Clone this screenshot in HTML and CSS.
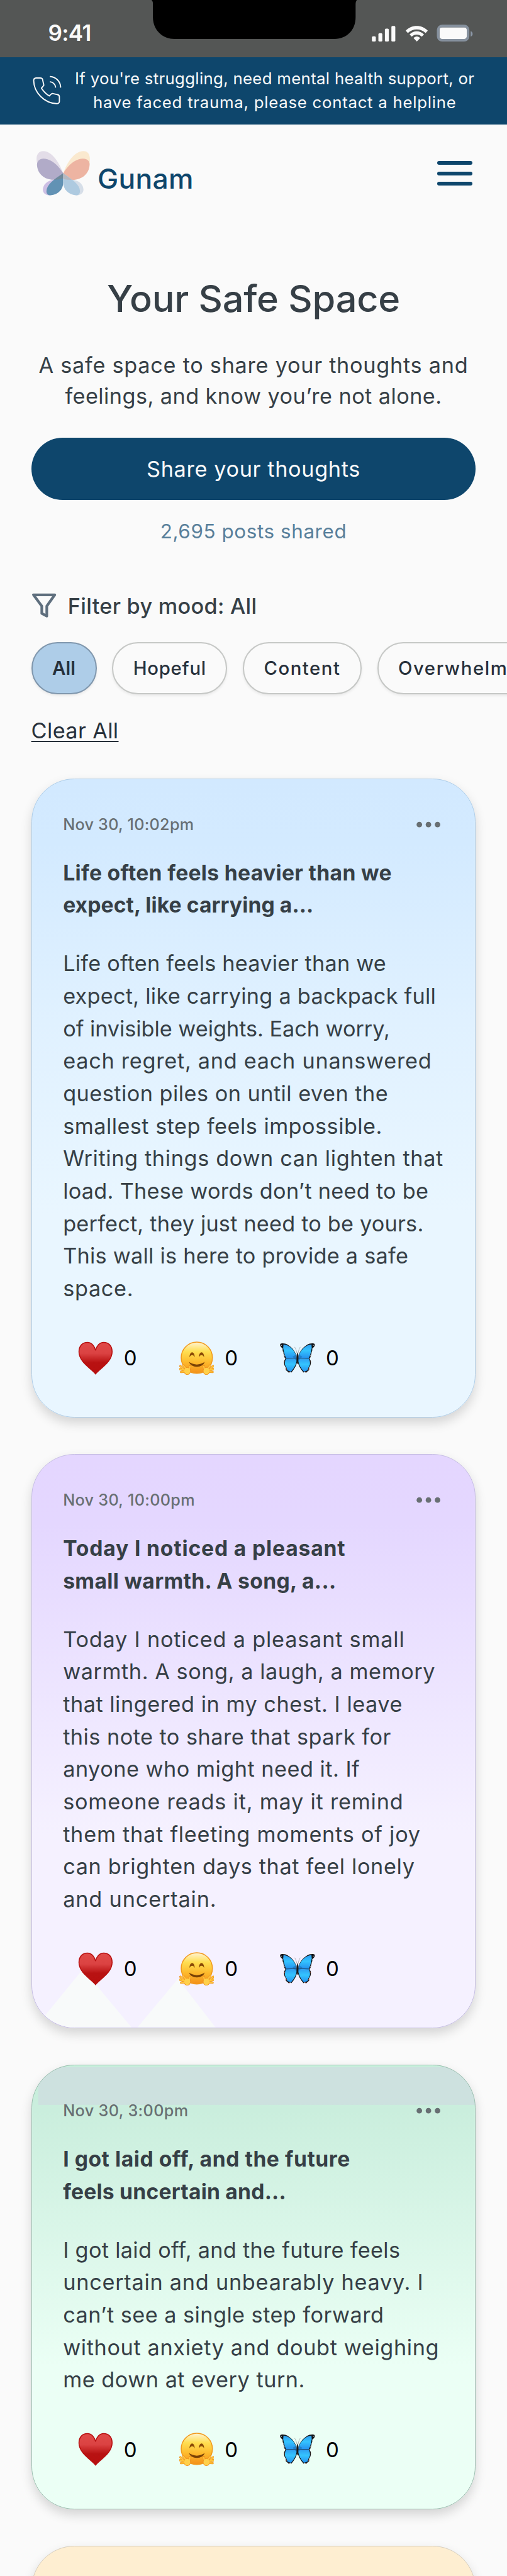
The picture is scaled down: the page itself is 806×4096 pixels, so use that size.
FILE: index.html
```html
<!DOCTYPE html>
<html lang="en">
<head>
<meta charset="utf-8">
<title>Gunam – Your Safe Space</title>
<link rel="stylesheet" href="styles.css">
</head>
<body>
<svg class="sprite" width="0" height="0" aria-hidden="true">
  <defs>
    <linearGradient id="heart-fill" x1="0" y1="0" x2="0" y2="1">
      <stop offset="0" stop-color="#e04b49"/><stop offset=".35" stop-color="#db4242"/><stop offset=".64" stop-color="#b81212"/><stop offset="1" stop-color="#b70f0f"/>
    </linearGradient>
    <linearGradient id="face-fill" x1="0" y1="0" x2="0" y2="1">
      <stop offset="0" stop-color="#fff3d2"/><stop offset=".3" stop-color="#ffdf52"/><stop offset=".65" stop-color="#fdb92c"/><stop offset="1" stop-color="#f3901a"/>
    </linearGradient>
    <linearGradient id="wing-fill" x1="0" y1="0" x2="0" y2="1">
      <stop offset="0" stop-color="#2f9df0"/><stop offset=".45" stop-color="#34c4ff"/><stop offset="1" stop-color="#2490ee"/>
    </linearGradient>
    <symbol id="heart" viewBox="-2 -2 108 104">
      <path d="M52 98C40 82 1 62 1 30C1 11 12 1 27 1C40 1 49 12 52 26C55 12 64 1 77 1C92 1 103 11 103 30C103 62 64 82 52 98Z" fill="url(#heart-fill)" stroke="#b81111" stroke-width="3"/>
    </symbol>
    <symbol id="hug" viewBox="-0.5 -1 108 104">
      <circle cx="53.500" cy="49" r="48" fill="url(#face-fill)" stroke="#f29a1e" stroke-width="3"/>
      <path d="M31 48C31 27 47 27 47 48C43 39 35 39 31 48ZM60 48C60 27 76 27 76 48C72 39 64 39 60 48Z" fill="#8a4a06"/>
      <path d="M29 62Q53.500 78 78 62Q72 77 53.500 77Q35 77 29 62Z" fill="#7a4205"/>
      <g id="hand">
        <path d="M18 90L3 75M18 88L2 84M20 92L5 93M24 88L12 73M29 90L32 74" stroke="#f0931f" stroke-width="7" stroke-linecap="round"/>
        <ellipse cx="24" cy="90" rx="11" ry="12" fill="#f0931f"/>
        <path d="M18 90L3 75M18 88L2 84M20 92L5 93M24 88L12 73M29 90L32 76" stroke="#ffc63c" stroke-width="4" stroke-linecap="round"/>
        <ellipse cx="24" cy="90" rx="9" ry="10" fill="#ffd04a"/>
      </g>
      <use href="#hand" transform="translate(107 0) scale(-1 1)"/>
    </symbol>
    <symbol id="butterfly" viewBox="0 -6 108 104">
      <g id="wing">
        <path d="M1 2C4 -1 12 0 17 1C33 7 46 22 51 38L53 56C51 68 44 80 35 90L31 87L28 91L24 87L18 82L18 74C13 68 12 60 13 54L17 46C12 42 13 38 12 34L9 24L7 14C3 12 -1 7 1 2Z" fill="#121417"/>
        <path d="M11 3C28 4 45 20 50 38L51 45L19 45.500L15 36L12 24L10 14Z" fill="url(#wing-fill)"/>
        <path d="M19 47L51 46C53 58 47 73 34 87L23 83L20 74C14 67 14 56 19 47Z" fill="url(#wing-fill)"/>
        <path d="M39 41L52 33V54L46 48Z" fill="#15568f" opacity=".4"/>
        <g fill="#fff"><circle cx="5" cy="6" r="1.100"/><circle cx="8" cy="17" r="1"/><circle cx="11" cy="27" r="1"/><circle cx="14" cy="38" r="1"/></g>
        <g fill="#e2562e"><circle cx="15" cy="57" r="1"/><circle cx="20" cy="79" r="1.200"/><circle cx="29" cy="88" r="1.200"/></g>
        <path d="M52 29C50 20 48 14 45 11" fill="none" stroke="#777" stroke-width="1"/>
      </g>
      <use href="#wing" transform="translate(108 0) scale(-1 1)"/>
      <ellipse cx="54" cy="46" rx="2.500" ry="18" fill="#1c1a1a"/>
    </symbol>
    <symbol id="dots" viewBox="0 0 74 20">
      <circle cx="9" cy="10" r="8.500"/><circle cx="37" cy="10" r="8.500"/><circle cx="65" cy="10" r="8.500"/>
    </symbol>
  </defs>
</svg>

<div class="status">
  <span class="status-time" data-w="132">9:41</span>
  <svg class="notch" viewBox="0 0 632 120"><path d="M0 0H632Q628 4 628 12V53C628 92 602 120 562 120H72C32 120 4 92 4 53V12Q4 4 0 0Z"/></svg>
  <svg class="status-icons" viewBox="0 0 1020 270">
    <g fill="#fafafa">
      <rect x="42" y="156" width="36" height="48" rx="10"/><rect x="102" y="126" width="36" height="78" rx="10"/>
      <rect x="162" y="84" width="36" height="120" rx="10"/><rect x="222" y="60" width="36" height="144" rx="10"/>
      <path d="M354 103C410 45 502 45 558 103L538 125C492 80 420 80 374 125ZM390 138C428 99 484 99 523 138L503 159C476 132 436 132 409 159ZM426 172C444 152 470 152 488 172L457 204Z"/>
      <rect x="666" y="72" width="252" height="108" rx="22"/>
    </g>
    <rect x="654" y="60" width="276" height="132" rx="36" fill="none" stroke="#86919e" stroke-width="24"/>
    <path d="M954 108Q972 116 972 133Q972 150 954 159Z" fill="#8c98a8"/>
  </svg>
</div>

<div class="banner">
  <svg class="phone" viewBox="34 68 270 272" fill="none" stroke="#fafafa" stroke-width="11" stroke-linecap="round" stroke-linejoin="round">
    <path d="M64 90H104Q122 90 126 104C130 122 130 132 136 146Q140 158 132 166L115 184C133 214 155 238 188 257L206 240Q214 233 224 236C238 240 248 242 262 244Q282 248 282 264V308Q280 330 256 329C142 324 44 226 43 112Q44 92 64 90Z"/>
    <path d="M198 77C248 80 290 120 294 175M198 126C222 130 242 150 247 175"/>
  </svg>
  <p class="banner-text"><span class="line" data-w="1230">If you're struggling, need mental health support, or</span> <span class="line" data-w="1118">have faced trauma, please contact a helpline</span></p>
</div>

<header class="header">
  <div class="brand">
    <svg class="logo" viewBox="64 766 496 412">
      <path d="M311 973C270 860 200 768 126 768C80 768 50 810 72 890C80 970 150 1040 235 1030Z" fill="#e3dde8"/>
      <path d="M311 973C350 860 420 768 500 768C545 768 568 810 553 890C546 970 470 1040 390 1032Z" fill="#fae9cf"/>
      <path d="M235 1030C160 1036 123 1080 123 1125C123 1160 155 1178 190 1176L290 1070Z" fill="#cdbfe4"/>
      <path d="M388 1032C460 1036 498 1080 498 1125C498 1160 465 1178 430 1176L330 1070Z" fill="#d6dee8"/>
      <path d="M311 973C260 890 190 837 130 837C85 837 66 870 69 900C75 980 140 1036 230 1032L260 1015Z" fill="#b1abc8"/>
      <path d="M311 973C360 890 430 837 492 837C540 837 558 868 555 895C550 980 480 1036 390 1033Z" fill="#edb4a2"/>
      <path d="M311 973C230 1025 156 1080 156 1138C156 1165 172 1176 195 1176C265 1172 311 1120 311 1060Z" fill="#6292b4"/>
      <path d="M311 973L226 1034Q270 1032 311 1018Z" fill="#718999"/>
      <path d="M311 973C395 1030 466 1080 466 1138C466 1165 450 1176 428 1176C360 1172 311 1120 311 1060Z" fill="#aecae0"/>
      <path d="M311 973L391 1034Q350 1034 311 1026Z" fill="#b5b8c0"/>
    </svg>
    <span class="brand-name" data-w="296">Gunam</span>
  </div>
  <div class="menu"><i></i><i></i><i></i></div>
</header>

<main class="page">
  <section class="hero">
    <h1 class="title"><span class="line" data-w="902">Your Safe Space</span></h1>
    <p class="subtitle"><span class="line" data-w="1322">A safe space to share your thoughts and</span> <span class="line" data-w="1160">feelings, and know you’re not alone.</span></p>
    <button class="share"><span class="line" data-w="658">Share your thoughts</span></button>
    <p class="count"><span class="line" data-w="574">2,695 posts shared</span></p>
  </section>

  <section class="filters">
    <div class="filter-head">
      <svg class="funnel" viewBox="0 0 76 76" fill="none" stroke="#5f6f7e" stroke-width="8" stroke-linejoin="round"><path d="M6 6H70L46 40V70L31 62V40Z"/></svg>
      <span class="line" data-w="582">Filter by mood: All</span>
    </div>
    <div class="pills">
      <span class="pill pill-active"><span class="line" data-w="72">All</span></span>
      <span class="pill"><span class="line" data-w="225">Hopeful</span></span>
      <span class="pill"><span class="line" data-w="236">Content</span></span>
      <span class="pill"><span class="line" data-w="412">Overwhelmed</span></span>
    </div>
    <a class="clear"><span class="line" data-w="269">Clear All</span></a>
  </section>

  <section class="feed">
    <article class="card card-blue">
      <div class="card-head"><time class="line" data-w="403">Nov 30, 10:02pm</time><svg class="dots"><use href="#dots"/></svg></div>
      <h2 class="card-title"><span class="line" data-w="1012">Life often feels heavier than we</span> <span class="line" data-w="771">expect, like carrying a...</span></h2>
      <p class="card-body">
        <span class="line" data-w="995">Life often feels heavier than we</span>
        <span class="line" data-w="1148">expect, like carrying a backpack full</span>
        <span class="line" data-w="1006">of invisible weights. Each worry,</span>
        <span class="line" data-w="1135">each regret, and each unanswered</span>
        <span class="line" data-w="1001">question piles on until even the</span>
        <span class="line" data-w="983">smallest step feels impossible.</span>
        <span class="line" data-w="1171">Writing things down can lighten that</span>
        <span class="line" data-w="1125">load. These words don’t need to be</span>
        <span class="line" data-w="1110">perfect, they just need to be yours.</span>
        <span class="line" data-w="1063">This wall is here to provide a safe</span>
        <span class="line" data-w="217">space.</span>
      </p>
      <div class="reactions">
        <span class="reaction"><svg><use href="#heart"/></svg>0</span>
        <span class="reaction"><svg><use href="#hug"/></svg>0</span>
        <span class="reaction"><svg><use href="#butterfly"/></svg>0</span>
      </div>
    </article>

    <article class="card card-violet">
      <div class="card-head"><time class="line" data-w="406">Nov 30, 10:00pm</time><svg class="dots"><use href="#dots"/></svg></div>
      <h2 class="card-title"><span class="line" data-w="870">Today I noticed a pleasant</span> <span class="line" data-w="841">small warmth. A song, a...</span></h2>
      <p class="card-body">
        <span class="line" data-w="1052">Today I noticed a pleasant small</span>
        <span class="line" data-w="1146">warmth. A song, a laugh, a memory</span>
        <span class="line" data-w="1045">that lingered in my chest. I leave</span>
        <span class="line" data-w="1010">this note to share that spark for</span>
        <span class="line" data-w="914">anyone who might need it. If</span>
        <span class="line" data-w="1048">someone reads it, may it remind</span>
        <span class="line" data-w="1101">them that fleeting moments of joy</span>
        <span class="line" data-w="1083">can brighten days that feel lonely</span>
        <span class="line" data-w="473">and uncertain.</span>
      </p>
      <div class="reactions">
        <span class="reaction"><svg><use href="#heart"/></svg>0</span>
        <span class="reaction"><svg><use href="#hug"/></svg>0</span>
        <span class="reaction"><svg><use href="#butterfly"/></svg>0</span>
      </div>
      <svg class="peaks" viewBox="0 0 1368 180"><path d="M10 180L157 0L307 180ZM325 180L450 30L566 180Z" fill="#f8fafa"/></svg>
    </article>

    <article class="card card-green">
      <div class="card-head"><time class="line" data-w="386">Nov 30, 3:00pm</time><svg class="dots"><use href="#dots"/></svg></div>
      <h2 class="card-title"><span class="line" data-w="884">I got laid off, and the future</span> <span class="line" data-w="687">feels uncertain and...</span></h2>
      <p class="card-body">
        <span class="line" data-w="1038">I got laid off, and the future feels</span>
        <span class="line" data-w="1110">uncertain and unbearably heavy. I</span>
        <span class="line" data-w="988">can’t see a single step forward</span>
        <span class="line" data-w="1158">without anxiety and doubt weighing</span>
        <span class="line" data-w="745">me down at every turn.</span>
      </p>
      <div class="reactions">
        <span class="reaction"><svg><use href="#heart"/></svg>0</span>
        <span class="reaction"><svg><use href="#hug"/></svg>0</span>
        <span class="reaction"><svg><use href="#butterfly"/></svg>0</span>
      </div>
    </article>

    <article class="card card-amber"></article>
  </section>
</main>
<script src="fit.js"></script>
</body>
</html>
```
FILE: styles.css
```css
/* 1rem = 10 design points */
html { font-size: 20.66px; overflow: hidden; }
* { box-sizing: border-box; margin: 0; padding: 0; }
body {
  display: flex;
  flex-direction: column;
  height: 4096px;
  background: #fafafa;
  color: #363f46;
  font-family: Inter, "Open Sans", sans-serif;
  font-size: 1.66rem;
}
svg { display: block; }
.sprite { position: absolute; }
.line { display: block; width: fit-content; white-space: nowrap; }

/* status bar */
.status {
  position: relative;
  display: flex;
  flex: none;
  justify-content: space-between;
  height: 4.4rem;
  padding: 1.5rem 2.25rem 0 3.7rem;
  background: #545655;
  color: #fafafa;
}
.status-time { margin-top: .2rem; height: 1.7rem; font-size: 1.7rem; line-height: 1.7rem; font-weight: 600; }
.status-icons { width: 8.5rem; height: 2.25rem; }
.notch { position: absolute; top: 0; left: 11.65rem; width: 15.8rem; height: 3rem; }

/* helpline banner */
.banner {
  display: flex;
  flex: none;
  align-items: center;
  gap: 1rem;
  height: 5.2rem;
  padding: 0 2.5rem .1rem 2.53rem;
  background: #0e466c;
  color: #fafafa;
}
.phone { width: 2.25rem; height: 2.27rem; }
.banner-text { font-size: 1.25rem; line-height: 1.8rem; flex: 1; }
.banner-text .line { margin: 0 auto; }

/* header */
.header {
  display: flex;
  flex: none;
  align-items: center;
  justify-content: space-between;
  height: 7.5rem;
  padding: 0 2.65rem 0 2.8rem;
}
.brand { display: flex; align-items: center; gap: .57rem; color: #0e466c; }
.logo { width: 4.13rem; height: 3.43rem; }
.brand-name { padding-top: .9rem; font-size: 2.15rem; line-height: 2.6rem; font-weight: 500; }
.menu { display: flex; flex-direction: column; gap: .5rem; width: 2.7rem; }
.menu i { height: .3rem; border-radius: .15rem; background: #0e466c; }

.page { flex: 1; min-height: 0; overflow: hidden; }

/* hero */
.hero { display: flex; flex-direction: column; align-items: center; padding: 4.2rem 2.4rem 0; }
.title { font-size: 2.88rem; line-height: 3.35rem; font-weight: 500; }
.subtitle { margin-top: 2.25rem; line-height: 2.4rem; }
.subtitle .line { margin: 0 auto; }
.share {
  display: flex;
  align-items: center;
  justify-content: center;
  width: 100%;
  height: 4.8rem;
  margin-top: 2rem;
  border: 0;
  border-radius: 2.4rem;
  background: #0e466c;
  color: #fafafa;
  font: inherit;
}
.count { margin-top: 1.24rem; color: #587f9a; font-size: 1.52rem; line-height: 2.4rem; }

/* filters */
.filters { padding: 3.28rem 0 0 2.4rem; }
.filter-head { display: flex; align-items: center; gap: .87rem; height: 2.4rem; font-weight: 500; }
.funnel { width: 1.95rem; height: 2.2rem; }
.pills { display: flex; gap: 1.2rem; margin-top: 1.6rem; }
.pill {
  display: flex;
  flex: none;
  align-items: center;
  justify-content: center;
  height: 4rem;
  padding: 0 1.52rem;
  border: .1rem solid #c6c8c6;
  border-radius: 2rem;
  background: #fafafa;
  box-shadow: 0 .1rem .2rem rgba(0, 0, 0, .08);
  color: #27303a;
  font-size: 1.42rem;
  font-weight: 500;
}
.pill-active { border-color: #8097ad; background: #aecde8; font-weight: 600; }
.clear { display: block; width: fit-content; margin-top: 1.6rem; color: #27303a; line-height: 2.4rem; text-decoration: underline; text-decoration-thickness: .1rem; text-underline-offset: .2rem; }

/* feed */
.feed { display: flex; flex-direction: column; gap: 2.8rem; padding: 2.5rem 2.4rem 0; }
.card {
  position: relative;
  padding: 2.6rem 2.4rem 3.3rem;
  border: 1px solid;
  border-radius: 3.3rem;
  box-shadow: 0 .4rem .8rem rgba(0, 0, 0, .15);
}
.card-blue { height: 49.2rem; border-color: #aecde8; background: linear-gradient(#d2e9ff, #d3eaff 10%, #e0f1ff 38%, #e9f6ff 68%); }
.card-violet { height: 44.2rem; border-color: #c5bde3; background: linear-gradient(#e4d6ff, #e4d7ff 12%, #f5f1ff 66%); }
.card-green {
  height: 34.2rem;
  border-color: #9cbfb0;
  background:
    linear-gradient(#cde1df, #cde1df) .5rem .15rem / 100% 2.9rem no-repeat,
    linear-gradient(#c7eedb, #caeedd 10%, #ebfff5 68%);
}
.card-amber { height: 20rem; border-color: #d8cfbf; background: #feeed1; }
.card-head { display: flex; justify-content: space-between; align-items: center; height: 1.8rem; color: #686f73; font-size: 1.22rem; font-weight: 500; }
.dots { width: 1.85rem; height: .5rem; margin-right: .25rem; fill: #686f73; }
.card-title { margin-top: 1.55rem; font-size: 1.63rem; line-height: 2.5rem; font-weight: 700; }
.card-body { margin-top: 2rem; line-height: 2.5rem; }
.reactions { position: relative; z-index: 1; display: flex; margin-top: 2.86rem; padding-left: 1.15rem; color: #000; font-size: 1.6rem; }
.reaction { display: flex; align-items: center; gap: .82rem; width: 7.78rem; height: 2.5rem; }
.reaction svg { width: 2.7rem; height: 2.6rem; }
.peaks { position: absolute; left: 0; bottom: 0; width: 100%; height: 4.5rem; border-radius: 0 0 3.3rem 3.3rem; overflow: hidden; }
```
FILE: fit.js
```js
// Tracks every line of text to its measure (data-w, in quarter points; 40 units = 1rem).
const rem = parseFloat(getComputedStyle(document.documentElement).fontSize);
document.querySelectorAll('[data-w]').forEach((el) => {
  const target = (el.dataset.w / 40) * rem;
  const range = document.createRange();
  range.selectNodeContents(el);
  const natural = range.getBoundingClientRect().width;
  el.style.letterSpacing = (target - natural) / el.textContent.length + 'px';
});
```
